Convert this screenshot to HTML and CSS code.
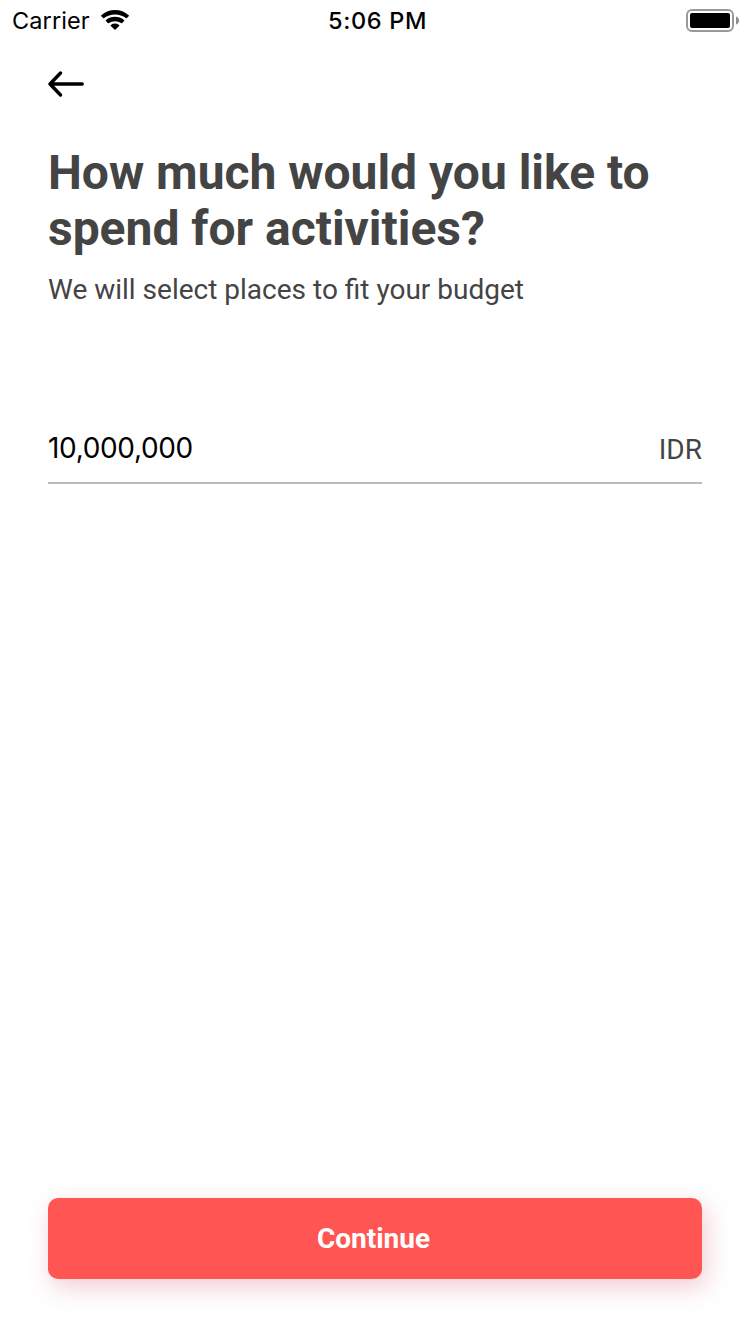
FILE: index.html
```html
<!DOCTYPE html>
<html lang="en">
<head>
<meta charset="utf-8">
<title>Activity budget</title>
<link rel="stylesheet" href="styles.css">
</head>
<body>
<div class="screen">
  <header class="status">
    <div class="carrier"><span class="network">Carrier</span>
      <svg class="wifi" width="28" height="20" viewBox="0 0 28 20"><path d="M.3 5.3Q6.2 0 14 0T27.7 5.3Q28.2 5.8 27.7 6.3L25.9 8.1Q25.4 8.6 24.9 8.1 20.2 4.4 14 4.4T3.1 8.1Q2.6 8.6 2.1 8.1L.3 6.3Q-.2 5.8 .3 5.3ZM5 10Q8.8 6.8 14 6.8T23 10Q23.6 10.5 23.1 11L21.2 12.9Q20.7 13.4 20.1 12.9 17.3 11.2 14 11.2T7.9 12.9Q7.3 13.4 6.8 12.9L4.9 11Q4.4 10.5 5 10ZM9.9 14.9Q11.6 13.5 14 13.5T18.1 14.9Q18.7 15.4 18.2 15.9L14.5 19.6Q14 20 13.5 19.6L9.8 15.9Q9.3 15.4 9.9 14.9Z"/></svg>
    </div>
    <span class="time">5:06 PM</span>
    <svg class="battery" width="54" height="23" viewBox="0 0 54 23"><rect x="1" y="1" width="46" height="21" rx="5" fill="none" stroke="#999" stroke-width="2"/><rect x="4" y="4" width="40" height="15" rx="2"/><path d="M50 7.5Q53 8.5 53 11.5T50 15.5Z" fill="#8c8c8c"/></svg>
  </header>
  <main class="content">
    <svg class="back" width="36" height="26" viewBox="0 0 36 26"><path d="M12.5 2 2 13 12.5 24M2 13H34.2" fill="none" stroke="#000" stroke-width="3.4" stroke-linecap="round" stroke-linejoin="round"/></svg>
    <h1 class="title">How much would you like to<br>spend for activities?</h1>
    <p class="subtitle">We will select places to fit your budget</p>
    <div class="field"><span class="amount">10,000,000</span><span class="currency">IDR</span></div>
    <button class="continue">Continue</button>
  </main>
</div>
</body>
</html>
```
FILE: styles.css
```css
* { box-sizing: border-box; }
body { margin: 0; background: #fff; color: #444; font-family: Roboto, sans-serif; }
.screen { height: 1334px; display: flex; flex-direction: column; }
.status { height: 40px; padding: 0 10px 0 12px; display: grid; grid-template-columns: 1fr auto 1fr; align-items: center; color: #000; font: 24px/40px Inter, sans-serif; }
.carrier { display: flex; align-items: center; gap: 11px; }
.network { padding-top: 2px; font-size: 23.5px; line-height: 38px; letter-spacing: .1px; }
.time { padding: 2px 0 0 3px; font-size: 23.5px; line-height: 38px; font-weight: 500; letter-spacing: .65px; }
.battery { justify-self: end; }
.content { flex: 1; display: flex; flex-direction: column; padding: 31px 48px 55px; }
.back { display: block; flex: none; }
.title { margin: 48px 0 0; font-size: 48px; line-height: 56px; font-weight: 700; letter-spacing: -.02px; white-space: nowrap; }
.subtitle { margin: 16px 0 0; font-size: 28px; line-height: 33px; }
.field { margin-top: 113px; height: 65px; padding-bottom: 16px; border-bottom: 2px solid #bbb; display: flex; justify-content: space-between; align-items: flex-end; font-size: 28px; line-height: 33px; }
.amount { color: #000; font: 28px/35px Inter, sans-serif; letter-spacing: -.35px; }
.continue { margin-top: auto; height: 81px; padding: 0 3px 0 0; border: 0; border-radius: 10px; background: #ff5654; color: #fff; font: 700 28px/33px Roboto, sans-serif; box-shadow: 4px 8px 24px rgba(205,50,70,.25); }
```
